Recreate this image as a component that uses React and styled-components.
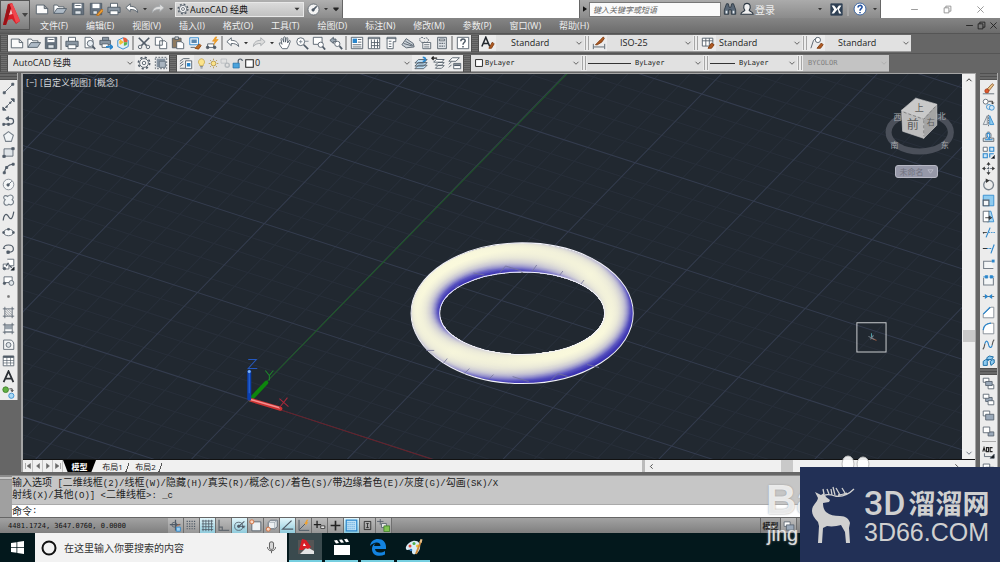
import React from 'react'
import styled, { createGlobalStyle, css } from 'styled-components'

const ui = '"Open Sans", "Noto Sans CJK SC", sans-serif'
const mono = '"DejaVu Sans Mono", "Noto Sans CJK SC", monospace'

const GlobalStyle = createGlobalStyle`
* { box-sizing: border-box; }
body { margin: 0; background: #666; font-family: ${ui}; font-size: 10px; color: #222; }
button, input, select { font: inherit; color: inherit; margin: 0; padding: 0; border: none; background: none; border-radius: 0; outline: none; }
button { display: flex; align-items: center; justify-content: center; flex: none; cursor: pointer; white-space: nowrap; }
select { appearance: none; }
svg { display: block; flex: none; }
`

/* ---------- icons ---------- */
const ink = '#505b67'
const blue = '#2a86cc'
const pale = '#cfe6f7'

const icons = {
  file: <path d="M1.5 3.5h9l4 4v6h-13zM10.500 3.500v4h4" fill="#fbfbfb" />,
  open: <g><path d="M1 13V3.500h4l1.500 2h6V8" fill="#fff" /><path d="M1 13l3.500-5.500H15.500L12 13z" fill="#aebac6" /></g>,
  save: <g><path d="M1.500 1.500h13v13h-13z" fill="#66727f" /><path d="M4 2h8v5H4z" fill="#fff" stroke="none" /><path d="M4.500 10h7v4h-7z" fill="#dfe5ea" /><path d="M5 4h6" /></g>,
  saveas: <g><path d="M1.500 1.500h13v13h-13z" fill="#66727f" /><path d="M4 2h8v5H4z" fill="#fff" stroke="none" /><path d="M4.500 10h5v4h-5z" fill="#dfe5ea" /><path d="M8.500 15l6-7 2 2-6 6z" fill="#e79b35" stroke="#b36b1c" /></g>,
  print: <g><path d="M4 6V1.500h8V6" fill="#fff" /><path d="M1 6h14v6H1z" fill="#8a96a2" /><path d="M3.500 10h9v4.500h-9z" fill="#fff" /></g>,
  preview: <g><path d="M3.500 1.500h6l3 3v9h-9z" fill="#fff" /><circle cx="9.500" cy="8.500" r="3.500" fill="#e8eef3" /><path d="M12 11.500l3 3.500" strokeWidth="2" /></g>,
  publish: <g><path d="M4 5V1.500h7V5M1 5h12v5H1z" fill="#8a96a2" /><path d="M3.500 9h7v4h-7z" fill="#fff" /><path d="M8 12.500h7M12.500 10l3 2.500-3 2.500" stroke={blue} strokeWidth="2" /></g>,
  model3d: <g><path d="M2 5l6-3 6 3v7l-6 3-6-3z" fill="#e2edf5" stroke={blue} /><path d="M8 2a4 4 0 0 1 5 5l-4 0z" fill="#e65d3a" stroke="none" /><path d="M13 7a4 4 0 0 1-4 4V7z" fill="#58b34c" stroke="none" /><path d="M5 4a4 4 0 0 0 0 6l4-3z" fill="#f3bf36" stroke="none" /></g>,
  cut: <g><path d="M2 2l9 9M14 2l-9 9" strokeWidth="1.800" /><circle cx="3.500" cy="12.500" r="2" /><circle cx="12.500" cy="12.500" r="2" /></g>,
  copy: <path d="M1.500 1.500h6l2 2v7h-8zM6.500 5.500h6l2 2v7h-8z" fill="#fff" />,
  paste: <g><path d="M1.500 2.500h10v11h-10z" fill="#8e7a5f" /><path d="M4.500 1h4v3h-4z" fill="#ccc" /><path d="M6.500 6.500h5l3 2v6h-8z" fill="#fff" /></g>,
  match: <g><path d="M2 2h10v8H2z" fill="#eef4f9" stroke={blue} /><path d="M4 4h6v4H4z" fill="#5a86ad" stroke="none" /><path d="M8 14l5-5 2 2-3 4z" fill="#c06c23" stroke="#8a4712" /><path d="M3 13h5" /></g>,
  block: <g><path d="M3 9h7v4H3z" fill="#fff" /><circle cx="3" cy="13" r="1.500" fill={ink} /><circle cx="11" cy="13" r="1.500" fill={ink} /><path d="M12 1L8.500 6h3L10 10l5-6h-3l1.500-3z" fill="#f2a129" stroke="#e08a10" strokeWidth=".6" /></g>,
  undo: <path d="M1 6.500L6 2v3c5 0 8 2 8.500 7C12 9 9.500 8.500 6 8.500V11z" fill="#fff" />,
  redo: <path d="M15 6.500L10 2v3c-5 0-8 2-8.500 7C4 9 6.500 8.500 10 8.500V11z" fill="#ddd" stroke="#a4a8ac" />,
  pan: <path d="M5 14.500C3 12 1 9 1.500 8s2 0 3 1.500L3.500 4c0-1.500 1.500-1.500 2 0l1 3V2c0-1.500 1.800-1.500 2 0v5l1-4.500c.5-1.200 1.800-.8 1.700.5L11 8l1.500-2.500c.8-1 1.900-.3 1.500.8-1 3-2 6-3.500 8.200z" fill="#fff" />,
  zoom: <g><circle cx="6.500" cy="6.500" r="4.500" fill="#fff" /><path d="M10 10l5 5" strokeWidth="2" /><path d="M4.500 6.500h4M6.500 4.500v4M11 6h4.500" stroke="#7b8691" /></g>,
  zoomwin: <g><path d="M1.500 1.500h10v8h-10z" fill="#fff" /><circle cx="10" cy="10" r="3" fill="#fff" /><path d="M12 12l3 3.500" strokeWidth="2" /></g>,
  zoomprev: <g><path d="M1 5l4-3.500v2h3v3H5v2z" fill="#9aa6b1" /><circle cx="9.500" cy="9" r="3" fill="#fff" /><path d="M12 11.500l3 3.500" strokeWidth="2" /></g>,
  props: <g><path d="M1.500 1.500h13v13h-13z" fill="#fff" /><path d="M3 3h5v5H3z" fill={blue} stroke="none" /><path d="M9 4h4M9 7h4M3 10h10M3 12.500h10" /></g>,
  dcenter: <g><path d="M1.500 1.500h13v13h-13z" fill="#fff" /><path d="M1 3h14M5 4v10M5 7.500h9M5 11h9M8.500 4v10M12 4v10" /></g>,
  palette: <g><path d="M3.500 1.500h10v5h-3v8h-7z" fill="#fff" /><path d="M3 3h11M5.500 6h3M5.500 9h3M5.500 12h3" /></g>,
  sheets: <path d="M1 10l5-7 8 5.500 1 4-9 1zM3 8.500l10 3M5 6l9 5" fill="#cad1d8" />,
  markup: <g><path d="M2 4c0-3 4-3 5-1 3-2 5 0 5 2s-3 3-5 2c-2 1-5 0-5-3z" strokeDasharray="2 1" /><path d="M5.500 7.500h9v7h-9z" fill="#fff" /><path d="M7 10h6M7 12.500h6" /></g>,
  calc: <g><path d="M3 1.500h10v13H3z" fill="#dfe3e7" /><path d="M5 3.500h6v2H5z" fill="#fff" /><path d="M5 8.500h6M5 11.500h6" strokeDasharray="1.500 1" strokeWidth="1.500" /></g>,
  help: <g><path d="M1.500 1.500h13v13h-13z" fill="#fff" /><path d="M5.500 6c0-3.500 5-3.500 5-.5 0 2-2.500 2-2.500 4.500M8 11.500v1.500" strokeWidth="1.700" /></g>,
  textstyle: <g><path d="M1 12L5.500 1.500 10 12M3 8.500h5.500" strokeWidth="1.800" stroke="#23282e" /><path d="M9 14l4-7 2 2-3 5z" fill="#b05a22" stroke="#7e3b10" /></g>,
  dimstyle: <g><path d="M1.500 9v6M14.500 9v6M2 12.500h12" /><path d="M4 10l6-6 3-3 1 2-3 4-5 3z" fill="#b05a22" stroke="#7e3b10" /></g>,
  tablestyle: <g><path d="M1.500 2.500h12v9h-12zM1.500 5.500h12M5.500 2.500v9M9.500 2.500v9" fill="#fff" /><path d="M8 14l4-6 3 2-3 4z" fill="#b05a22" stroke="#7e3b10" /></g>,
  leader: <g><path d="M1 14L4 5l4-3.500" /><circle cx="9" cy="4.500" r="3" fill="#fff" /><path d="M8 14l5-6 2 2-3 4z" fill="#b05a22" stroke="#7e3b10" /></g>,
  gear: <g><circle cx="8" cy="8" r="5" fill="#f5f5f5" /><circle cx="8" cy="8" r="2" /><circle cx="8" cy="8" r="6.500" strokeDasharray="2.500 2.600" strokeWidth="1.800" /></g>,
  wspace: <g><path d="M3 3h10v10H3z" fill="#8794a2" stroke="none" /><path d="M1.500 1.500h13v13h-13z" strokeDasharray="2 1.500" /><path d="M6 6h7v7H6z" fill="#a9b4bf" stroke="#66727f" /></g>,
  layers: <g><path d="M1 6l4-3h7M1 9l4-3M1 12l4-3M1 14h6" /><path d="M7.500 5.500h7v9h-7z" fill="#fff" /><path d="M9 8h4v4H9z" fill={blue} stroke="none" /></g>,
  bulb: <g><path d="M8 1a4.800 4.800 0 0 1 2.700 8.500V11H5.300V9.500A4.800 4.800 0 0 1 8 1z" fill="#fbe38a" stroke="#c3a040" /><path d="M6 12.500h4M6.500 14.500h3" /></g>,
  sun: <g><circle cx="8" cy="8" r="3.500" fill="#fbe38a" stroke="#a58431" /><path d="M8 1v2M8 13v2M1 8h2M13 8h2M3 3l1.500 1.500M11.500 11.500L13 13M13 3l-1.500 1.500M4.500 11.500L3 13" stroke="#a58431" /></g>,
  freeze: <g stroke="#b5b9bd"><path d="M1.500 1.500h8v6h-8z" /><circle cx="10.500" cy="10.500" r="3" strokeWidth="2" /></g>,
  lock: <g><path d="M9 8V4.500c0-4 6-4 6 0" strokeWidth="1.600" /><path d="M1.500 7.500h9v7h-9z" fill="#4aa3dc" stroke="#1d6ea7" /></g>,
  swatch: <path d="M2.500 2.500h11v11h-11z" fill="#fff" stroke="#222" strokeWidth="1.500" />,
  layset: <g><path d="M1 8l4-4h10l-4 4zM1 11.500l4-4h10l-4 4zM1 14.500l4-4h10l-4 4z" fill="#bcdcf2" /><path d="M10 1.500c4 0 4 4 0 5" stroke={blue} strokeWidth="2" /></g>,
  layprev: <g><path d="M3 7l3-3h9l-3 3zM5 10.500l3-3h7l-3 3zM5 14l3-3h7l-3 3z" fill="#fff" /><path d="M1 2.500h6M3 .5l-2 2 2 2" strokeWidth="1.500" stroke="#222" /></g>,
  laystate: <g><path d="M1 6l4-4h8l-4 4zM1 9.500l3-3M1 13l3-3" fill="#fff" /><path d="M6.500 8.500h8v6h-8z" fill="#fff" /><path d="M7 10.500h7" strokeWidth="2" /></g>,
  line: <g><path d="M3 13L13 3" /><path d="M1.500 12h2.500v2.500H1.500zM12 1.500h2.500V4H12z" fill={ink} /></g>,
  xline: <g><path d="M2 14L14 2" /><path d="M1 15v-4l4 4zM15 1v4l-4-4z" fill={ink} /><path d="M5 10h1.500v1.500H5zM9.500 5H11v1.500H9.500z" fill={ink} /></g>,
  pline: <g><path d="M2.500 12.500h8c5 0 5-7 0-7H6" strokeWidth="1.500" /><path d="M1 11.500h2V14H1zM7 11.500h2V14H7zM8 3L4.500 5.500 8 8z" fill={ink} /></g>,
  polygon: <path d="M8 2l6 4.500-2.500 7.500h-7L2 6.500z" fill="#f1f4f6" stroke="#77808a" strokeWidth="1.300" />,
  rect: <g><path d="M2.500 3.500h11v9h-11z" fill="#dfe4e8" /><path d="M1 11.500h3V14H1zM12 2h3v2.500h-3z" fill={ink} /></g>,
  arc: <g><path d="M3 14C3.500 7 7 3.500 14 2.500" strokeWidth="1.400" /><path d="M1.500 12H4v2.500H1.500zM12.500 1.500H15V4h-2.500zM4.500 5.500H7V8H4.500z" fill={ink} /></g>,
  circle: <g><circle cx="8" cy="8" r="6.500" fill="#f4f6f7" stroke="#77808a" /><path d="M8 8l4-4" /><circle cx="7.500" cy="8.500" r="1.500" fill={ink} /></g>,
  cloud: <path d="M4 7C0 5 3 0 7 3c4-4 9 0 5.500 4 4 3 0 8-4 5.500C5 16 0 12 4 7z" fill="#f0f3f5" stroke="#77808a" strokeWidth="1.400" />,
  spline: <path d="M1.500 13C2 6 5 3 8 8s5 3 6.500-6" strokeWidth="1.500" />,
  ellipse: <g><ellipse cx="8" cy="8" rx="6" ry="4" fill="#f4f6f7" /><path d="M1 7h2v2H1zM13 7h2v2h-2zM7 3h2v2H7z" fill={ink} /></g>,
  earc: <g><path d="M2 8.500C2 2 14 2 14 8.500c0 3-3 4-5.500 4" strokeWidth="1.400" /><path d="M6 11h3v3H6zM1 8h3" fill={ink} /></g>,
  insert: <g><path d="M6.500 1.500h8v8h-4M1.500 7.500h7v6h-7z" fill="#fff" /><path d="M5 10l3-4M9 9l3 3" strokeWidth="1.600" /><circle cx="3" cy="13" r="1.500" fill={ink} /><path d="M15 11v4h-4z" fill="#000" /></g>,
  makeblk: <g><path d="M2.500 3.500h10v7h-10z" fill="#fff" /><circle cx="3" cy="11.500" r="1.500" fill={ink} /><circle cx="11.500" cy="11" r="3" fill="#dfe4e8" /></g>,
  point: <path d="M7 7h2v2H7z" fill="#777" stroke="#777" />,
  hatch: <g><path d="M3.500 1v14M12.500 1v14M1 3.500h14M1 12.500h14" /><path d="M5 4l7 7M4 6l6 6M8 4l4 4M4 9l3 3" strokeWidth=".6" /></g>,
  gradient: <g><path d="M4 4h8v8H4z" fill="#9aa4ae" stroke="none" /><path d="M3.500 1v14M12.500 1v14M1 3.500h14M1 12.500h14" /><path d="M4 10h8" stroke="#fff" strokeWidth="2" /></g>,
  region: <g><path d="M2 2.500h8c3 0 4.500 3 4.500 5.500v6H2z" fill="#f4f6f7" /><circle cx="8" cy="8.500" r="3" fill="#dfe4e8" /></g>,
  table: <g><path d="M1.500 2.500h13v12h-13z" fill="#fff" /><path d="M1.500 3.500h13" strokeWidth="2.500" /><path d="M1.500 8h13M1.500 11h13M6 4v10M10.500 4v10" strokeWidth=".8" /></g>,
  mtext: <path d="M2 15L8 1.500 14 15M4 10.500h8" strokeWidth="2.200" stroke="#2a2e33" />,
  addsel: <g><circle cx="4.500" cy="4.500" r="3.500" fill="#62b044" stroke="#3d7c28" /><circle cx="11.500" cy="12" r="3.200" fill="#a9d8f5" stroke={blue} /><path d="M9 3.500h3.500v3M11 5l1.500 2L14 5" stroke="#222" /></g>,
  erase: <g><path d="M6 9l6.500-7 2 1.500-6 7.500z" fill="#e9c489" stroke="#8d5a2c" /><circle cx="6" cy="11" r="2.500" fill="#e0592c" stroke="#a43715" /><path d="M1 14.500h14" /></g>,
  copyobj: <g><circle cx="4.500" cy="4.500" r="3" fill="#fff" /><path d="M8 4h5v3M11.500 5.500l1.500 2 1.500-2" stroke="#222" /><circle cx="8.500" cy="11" r="3" stroke={blue} /><circle cx="12" cy="12" r="3" fill={pale} stroke={blue} /></g>,
  mirror: <g><path d="M6.500 2v11H1.500z" fill="#e8ebed" stroke="#77808a" /><path d="M9.500 2v11h5z" fill="#8ecbf0" stroke={blue} /><path d="M8 1v14" strokeDasharray="2 1" /></g>,
  offset: <g><path d="M1.500 14v-4h4C2 0 14 0 10.500 10h4v4z" fill="#e8ebed" /><path d="M3.500 12h4V9.500C3 2 12 2 9 9.500V12h4" stroke={blue} strokeWidth="1.300" /></g>,
  array: <g><path d="M1.500 1.500h5v5h-5z" fill="#fff" /><path d="M9.500 1.500h5v5h-5zM1.500 9.500h5v5h-5zM9.500 14V9.500h5" fill={pale} stroke={blue} strokeWidth="1.300" /><path d="M15.500 11.500v4h-4z" fill="#000" /></g>,
  move: <g><path d="M8 2v12M2 8h12" strokeDasharray="3 1" /><path d="M8 0l2.500 3.500h-5zM8 16l2.500-3.500h-5zM0 8l3.500-2.500v5zM16 8l-3.500-2.500v5z" fill="#333" stroke="none" /></g>,
  rotate: <g><path d="M5 3.300A6 6 0 1 0 9 2.500" strokeWidth="1.600" stroke="#77808a" /><path d="M4.500.5L9.500 3l-4.500 3z" fill="#333" stroke="none" /></g>,
  scale: <g><path d="M1.500 1.500h13v13h-13z" fill="#8ecbf0" stroke={blue} /><path d="M1.500 7.500h7v7h-7z" fill="#f4f6f7" strokeWidth="1.400" /></g>,
  stretch: <g><path d="M8 1.500h3l3.500 13H6z" fill="#a9d8f5" stroke={blue} /><path d="M1.500 1.500h7v13h-7z" fill="#fff" /><path d="M4 9.500h7M9 7.500l3 2-3 2z" stroke="#222" /></g>,
  trim: <g><path d="M5 14L10 2" stroke={blue} strokeWidth="1.400" /><path d="M1 8h5M2 7.500v2" stroke="#333" /><path d="M8 8h8" stroke={blue} strokeDasharray="2 1" /></g>,
  extend: <g><path d="M11 14L15 3" stroke={blue} strokeWidth="1.400" /><path d="M1 8h6" stroke="#333" strokeWidth="1.300" /><path d="M6 8h7" stroke={blue} strokeDasharray="2 1" strokeWidth="1.300" /></g>,
  breakpt: <g><path d="M12 4H2v9h12" fill="#f4f6f7" stroke="#77808a" strokeWidth="1.300" /><path d="M12 2h3.500v3.500H12z" fill={blue} stroke="none" /></g>,
  brk: <g><path d="M2 4.500v9h12v-9" fill="#f4f6f7" stroke="#77808a" strokeWidth="1.300" /><path d="M4 2h3v3H4zM10 2h3v3h-3zM1.500 3.500H5M11 3.500h4" fill={blue} stroke={blue} /></g>,
  join: <g><path d="M1 8h14" stroke="#555" /><path d="M3.500 5L8 8l-4.500 3zM12.500 5L8 8l4.500 3z" fill={blue} stroke="none" /></g>,
  chamfer: <g><path d="M1.500 10v4.500h13v-13H11z" fill="#fff" stroke="#77808a" /><path d="M1.500 10L10 1.500" stroke={blue} strokeWidth="1.500" /></g>,
  fillet: <g><path d="M1.500 10v4.500h13v-13H11C5 2 2 5 1.500 10z" fill="#fff" stroke="#77808a" /><path d="M1.500 10C2 5 5 2 11 1.500" stroke={blue} strokeWidth="1.500" /></g>,
  blend: <g><path d="M1 14c2-2 2-4 2.500-7M15 2c-2 2-2 4-2.500 7" stroke="#555" strokeWidth="1.400" /><path d="M3.500 7c2-6 4-2 4.500 1s3 6 4.500 1" stroke={blue} strokeWidth="1.400" /></g>,
  explode: <g><path d="M1.500 9l3-2h4l-2 2v5h-5zM6 4.500l3-2 5 1-2 3-6 1zM10 9l3-2 2 0v4l-4 3z" fill="#8ecbf0" stroke="#1d6ea7" strokeWidth="1.200" /></g>,
  front: <g><path d="M1.500 1.500h7v5h-7zM7.500 9.500h7v5h-7z" fill="#fff" /><path d="M4.500 5.500h8v5h-8z" fill="#9aa8b8" /></g>,
  back: <g><path d="M4.500 5.500h8v5h-8z" fill="#9aa8b8" /><path d="M1.500 1.500h7v5h-7zM7.500 9.500h7v5h-7z" fill="#fff" /></g>,
  above: <g><path d="M1.500 2.500h8v6h-8z" fill="#fff" /><path d="M4.500 6.500h10v7h-10z" fill="#9aa8b8" /></g>,
  under: <g><path d="M7.500 8.500h7v5h-7z" fill="#9aa8b8" /><path d="M1.500 2.500h8v7h-8z" fill="#fff" /></g>,
  snap: <g><path d="M8 1v13M1 7h13" strokeWidth="1.500" /><circle cx="6.500" cy="7" r="3" /><path d="M9 10h5v5H9z" fill="#9fd1f0" stroke={blue} /><path d="M10 9l3-3" stroke="#d2622b" /></g>,
  dots: <path d="M2 3h12M2 6h12M2 9h12M2 12h12" strokeDasharray="1.500 1.500" strokeWidth="1.500" />,
  grid: <path d="M2.500 1v14M6 1v14M9.500 1v14M13 1v14M1 2.500h14M1 6h14M1 9.500h14M1 13h14" />,
  ortho: <path d="M2.500 1v13H15M6.500 14v-4h-4" strokeWidth="1.500" stroke="#626970" />,
  polar: <g><circle cx="7" cy="9" r="5" /><circle cx="7" cy="9" r="1.500" fill={ink} /><path d="M7 9h8M7 9l7-6M11 9l3 2" strokeWidth="1.300" /></g>,
  osnap: <g><path d="M3.500 3.500h11v11h-11z" fill="#eef1f3" /><circle cx="3.500" cy="3.500" r="2.500" fill="#f6d9c8" stroke="#d2622b" /></g>,
  osnap3: <g><path d="M4 4l3-2.500h8v8L12 12H4z" fill="#eef1f3" /><path d="M4 4h8v8M12 4l3-2.500" stroke="#9aa4ae" /><circle cx="4" cy="12.500" r="2.500" fill="#f6d9c8" stroke="#d2622b" /></g>,
  otrack: <path d="M13 2L2 12.500h13" strokeWidth="1.500" />,
  ducs: <g><path d="M2.500 1v13H15M3 13l7-7" strokeWidth="1.200" /><path d="M12 1l-3 5h2l-1 3 4-5h-2l2-3z" fill="#f2a129" stroke="none" /></g>,
  dyn: <g><path d="M5 2v9M1 7h9" strokeWidth="1.600" stroke="#222" /><path d="M9.500 8.500h5v3h-5z" fill="#fff" stroke="#222" /></g>,
  lwt: <path d="M8 2v12M2 8h12" strokeWidth="2" stroke="#222" />,
  tpy: <g><path d="M1.500 1.500h13v13h-13z" fill="#bfe2f7" stroke={blue} strokeWidth="1.500" /><path d="M3 4.500h10M3 7h10M3 9.500h10M3 12h10" stroke={blue} strokeDasharray="1.500 1" strokeWidth=".8" /></g>,
  qp: <path d="M4 3h8v10H4zM8 5.500v5M6.500 5.500h3M6.500 10.500h3" stroke="#222" />,
  sc: <g><path d="M4 0v7M0 3h8" /><path d="M5.500 5.500h6v5h-6z" fill="#e8e8e8" /><path d="M8.500 8.500h7v7h-7z" fill="#7fc451" stroke="#3d7c28" /></g>,
  binoc: <g><path d="M1.500 9L4 2h2l1 4h2l1-4h2l2.500 7v5h-5V9h-3v5h-5z" fill="#596776" stroke="#2c3742" /><path d="M3 10h2v3H3zM11 10h2v3h-2z" fill="#dfe6ec" stroke="none" /></g>,
  user: <g><path d="M1 14c0-3 4-3 4.500-4.500C3 5 4.500 1.500 8 1.500S13 5 10.500 9.500C11 11 15 11 15 14z" fill="#f1f1f1" stroke="#2c3742" strokeWidth="1.300" /></g>,
  exchange: <g><path d="M1 1h14v14H1z" fill="#2f4054" stroke="#2f4054" /><path d="M2 3h3l4 5-4 5H2l3-5zM14 3h-3L8.500 6.500 10 9l1 4h3l-3-5z" fill="#fff" stroke="none" /></g>,
  qhelp: <g><circle cx="8" cy="8" r="6.800" fill="#fff" stroke="#2e5c9d" /><path d="M5.800 6.200c0-3 4.600-3 4.600-.4C10.400 7.700 8 7.500 8 10M8 11.300v1.500" stroke="#1f4fa0" strokeWidth="1.800" /></g>,
  compass: <g><circle cx="8" cy="8" r="6.800" fill="#f3f3f3" stroke="#5b646d" /><path d="M7 9l5-5" strokeWidth="2" /><circle cx="7.500" cy="8.500" r="1.500" fill={ink} /></g>,
  caret: <path d="M4 6h8l-4 4.500z" fill="#333" stroke="none" />,
  fullcaret: <path d="M1 4h14v3l-7 7-7-7z" fill="#222" stroke="none" />,
  hollow: <path d="M2 4h12l-6 8z" stroke="#c3c4cf" strokeWidth="1.500" />,
  chevron: <path d="M3 5.500l5 5 5-5" strokeWidth="1.600" />,
  up: <path d="M3 10.500l5-5 5 5" stroke="#333" strokeWidth="2" />,
  left: <path d="M10.500 3l-5 5 5 5" stroke="#333" strokeWidth="2" />,
  right: <path d="M5.500 3l5 5-5 5" stroke="#333" strokeWidth="2" />,
  play: <path d="M4 2.500v11L12 8z" fill="#111" stroke="none" />,
  first: <path d="M3 2v12M13 3v10L6 8z" fill="#666" stroke="#666" />,
  prev: <path d="M11 3v10L5 8z" fill="#666" stroke="#666" />,
  next: <path d="M5 3v10l6-5z" fill="#666" stroke="#666" />,
  last: <path d="M13 2v12M3 3v10l7-5z" fill="#666" stroke="#666" />,
  min: <path d="M2 8h12" strokeWidth="1.500" />,
  max: <path d="M2 5h8.500v9H2zM5 5V2h9v9h-3.500" strokeWidth="1.500" />,
  close: <path d="M2.500 2.500l11 11M13.500 2.500l-11 11" strokeWidth="1.500" />,
  abc: <g><path d="M1 7l1.500-5L4 7M5.500 2v5h2.500V2zM13 2h-3v5h3" strokeWidth="1.400" stroke="#222" /><path d="M3 9v4h9" /><path d="M15 10v5h-5z" fill="#000" /></g>,
  mic: <g stroke="#444"><path d="M5.500 2.500c0-2 5-2 5 0v6c0 2.500-5 2.500-5 0z" fill="#d5d5d5" /><path d="M3 7.500c0 6 10 6 10 0M8 12v3" /></g>,
}

const Icon = ({ name, size = 14, color = ink }) => (
  <svg width={size} height={size} viewBox="0 0 16 16" fill="none" stroke={color} aria-hidden="true">
    {icons[name]}
  </svg>
)

/* ---------- header ---------- */
const Page = styled.div`
display: flex;
flex-direction: column;
height: 100vh;
overflow: hidden;
position: relative;
background: #666;
`
const Header = styled.header`
display: grid;
grid-template-columns: 30px 1fr;
grid-template-rows: 18px 15px;
flex: none;
background: linear-gradient(#8c8c8c, #6b6b6b 90%, #5a5a5a);
`
const AppButton = styled.button`
grid-row: 1 / 3;
height: 30px;
border: 1px solid #555;
background: linear-gradient(#b4b4b4, #7d7d7d);
`
const TitleBar = styled.div`
display: flex;
align-items: stretch;
background: #fff;
`
const QuickAccess = styled.div`
display: flex;
align-items: center;
width: 313px;
padding-left: 3px;
background: linear-gradient(#b0b0b0, #8b8b8b);
border-right: 1px solid #666;
`
const ToolButton = styled.button`
width: ${p => p.$w || 17}px;
height: 16px;
`
const WorkspacePick = styled.label`
display: flex;
align-items: center;
width: 130px;
height: 15px;
gap: 1px;
padding: 0 1px;
background: linear-gradient(#dadada, #c2c2c2);
border: 1px solid #e8e8e8;
font-size: 9px;
select { flex: 1; min-width: 0; height: 13px; line-height: 13px; color: #111; }
`
const Spacer = styled.div`
flex: ${p => p.$grow || 1};
`
const InfoCenter = styled.div`
display: flex;
align-items: center;
width: 302px;
background: linear-gradient(#ababab, #8b8b8b);
border: solid #666;
border-width: 0 1px;
`
const SearchInput = styled.input`
width: 132px;
height: 15px;
padding: 0 3px;
background: #fafafa;
border: 1px solid #777;
font-size: 8px;
font-style: italic;
&::placeholder { color: #666; opacity: 1; }
`
const Login = styled.button`
flex: 1;
justify-content: flex-start;
color: #eee;
`
const WindowButtons = styled.div`
display: flex;
align-items: center;
width: 119px;
padding-left: 17px;
`
const MenuBar = styled.nav`
display: flex;
align-items: center;
gap: 18px;
padding-left: 10px;
background: linear-gradient(#858585, #6c6c6c);
font-size: 9px;
button { color: #efefef; line-height: 14px; }
`
const DocButtons = styled.div`
display: flex;
margin-left: auto;
padding-right: 1px;
`

/* ---------- toolbars ---------- */
const ToolRow = styled.div`
display: flex;
flex: none;
height: 20px;
padding-top: 1px;
border-top: 1px solid #555;
font-size: 9px;
`
const Grip = styled.div`
width: 8px;
height: 17px;
flex: none;
border: solid #4f4f4f;
border-width: 0 1px;
background: repeating-linear-gradient(#5a5a5a 0 1px, #707070 1px 2px);
`
const Panel = styled.div`
display: flex;
align-items: center;
flex: none;
height: 17px;
background: #ececec;
border-bottom: 1px solid #9a9a9a;
`
const Divider = styled.div`
width: ${p => (p.$double ? 4 : 1)}px;
height: 14px;
margin: 0 1px;
flex: none;
border: solid #a6a6a6;
border-width: 0 1px;
`
const Combo = styled.label`
display: flex;
align-items: center;
width: ${p => p.$w}px;
height: 16px;
padding: 0 1px 0 ${p => p.$pad || 5}px;
background: ${p => (p.$off ? '#c3c3c3' : '#e1e1e1')};
color: ${p => (p.$off ? '#808080' : '#222')};
${p => p.$mono && css`font-family: ${mono}; font-size: 7px;`}
select { flex: 1; min-width: 0; height: 16px; line-height: 16px; opacity: 1; }
`
const Stroke = styled.span`
width: ${p => p.$w}px;
height: 1px;
margin-right: 4px;
background: #333;
`

/* ---------- drawing area ---------- */
const Workspace = styled.main`
display: flex;
flex: 1;
min-height: 0;
padding: 0 2px 3px 0;
`
const SideBar = styled.div`
display: flex;
flex-direction: column;
align-items: center;
flex: none;
width: 18px;
align-self: ${p => (p.$fill ? 'stretch' : 'flex-start')};
overflow: hidden;
background: #ececec;
border-right: 1px solid #aaa;
button { width: 17px; height: 16px; }
`
const SideGrip = styled.div`
width: 100%;
height: 7px;
flex: none;
background: repeating-linear-gradient(#505050 0 1px, #686868 1px 3px);
`
const SideRule = styled.div`
width: 14px;
height: 1px;
margin: 2px 0;
flex: none;
background: #aaa;
`
const Frame = styled.section`
display: flex;
flex-direction: column;
flex: 1;
min-width: 0;
margin: 0 4px 0 3px;
border: solid #a5a5a5;
border-width: 1px 1px 0 2px;
background: #f0f0f0;
`
const Middle = styled.div`
display: flex;
flex: 1;
min-height: 0;
`
const Canvas = styled.div`
position: relative;
flex: 1;
min-width: 0;
background: #212830;
overflow: hidden;
`
const Drawing = styled.svg`
width: 100%;
height: 100%;
`
const ViewLabel = styled.div`
position: absolute;
top: 3px;
left: 3px;
display: flex;
gap: 3px;
font-size: 9px;
line-height: 12px;
button { color: #d5d8dc; }
`
const NamedUcs = styled.button`
position: absolute;
top: 91px;
right: 24px;
width: 43px;
height: 13px;
gap: 3px;
border: 1px solid #b7b8c4;
border-radius: 3px;
background: #9698a8;
color: #70727f;
font-size: 8px;
`
const VScroll = styled.div`
display: flex;
flex-direction: column;
width: 13px;
flex: none;
align-items: center;
button { height: 12px; }
`
const Thumb = styled.div`
width: 12px;
height: 12px;
flex: none;
background: #c9c9c9;
`
const TabBar = styled.div`
display: flex;
align-items: center;
height: 13px;
flex: none;
border-top: 1px solid #111;
background: #f0f0f0;
font-size: 8px;
`
const NavButton = styled.button`
width: 10px;
height: 12px;
border-right: 1px solid #c4c4c4;
`
const Tab = styled.button`
height: 12px;
width: 33px;
color: ${p => (p.$on ? '#fff' : '#222')};
font-weight: ${p => (p.$on ? 700 : 400)};
${p => p.$on
    ? css`background: #000; clip-path: polygon(0 0, 100% 0, 86% 100%, 14% 100%);`
    : css`background: linear-gradient(110deg, transparent 90%, #555 90% 93%, transparent 93%);`}
`
const HScroll = styled.div`
display: flex;
align-items: center;
width: 35%;
height: 12px;
margin-left: auto;
padding-right: 12px;
border-left: 3px solid #bbb;
`

/* ---------- command line, status, taskbar ---------- */
const CommandLine = styled.section`
display: flex;
flex: none;
height: 42px;
border-top: 1px solid #8c8c8c;
background: #c6c6c6;
`
const CommandGrip = styled.div`
width: 12px;
background: linear-gradient(#8b8b8b 1px, transparent 1px 3px, #8b8b8b 3px 4px, #a0a0a0 4px);
`
const CommandBody = styled.div`
flex: 1;
display: flex;
flex-direction: column;
line-height: 12px;
`
const History = styled.div`
flex: 1;
white-space: nowrap;
`
const Prompt = styled.label`
display: flex;
align-items: center;
height: 13px;
background: #fff;
border-top: 1px solid #aaa;
input { flex: 1; min-width: 0; }
`
const Mono = styled.span`
font-family: "Liberation Mono", monospace;
font-size: 9px;
line-height: 0;
white-space: pre;
`
const StatusBar = styled.footer`
display: flex;
align-items: center;
flex: none;
height: 16px;
border-top: 1px solid #666;
background: linear-gradient(#a2a2a2, #7f7f7f);
`
const Coords = styled.div`
width: 168px;
padding-left: 8px;
font-family: ${mono};
font-size: 7px;
color: #111;
`
const StatusButton = styled.button`
width: 16px;
height: 15px;
border-right: 1px solid #6f6f6f;
background: ${p => (p.$on ? 'linear-gradient(#e4f7fc, #8fcbdc)' : 'linear-gradient(#bcbcbc, #979797)')};
`
const LayoutButtons = styled.div`
display: flex;
margin-left: auto;
width: 240px;
`
const ModelButton = styled.button`
width: 21px;
border: solid #666;
border-width: 0 1px;
font-size: 8px;
font-weight: 700;
`
const Taskbar = styled.div`
display: flex;
flex: none;
height: 29px;
background: #03181c;
`
const StartButton = styled.button`
width: 35px;
`
const TaskSearch = styled.label`
display: flex;
align-items: center;
width: 252px;
padding: 0 9px 0 6px;
gap: 7px;
background: #f2f2f2;
input { flex: 1; min-width: 0; }
input::placeholder { color: #333; opacity: 1; }
`
const TaskApps = styled.div`
display: flex;
gap: 3px;
padding-left: 2px;
`
const TaskButton = styled.button`
width: 33px;
border-bottom: 2px solid #76cfe0;
background: ${p => (p.$on ? '#3a4a4e' : 'transparent')};
`

/* ---------- marks over the window ---------- */
const Watermark = styled.div`
position: absolute;
right: 0;
bottom: 0;
width: 236px;
height: 110px;
pointer-events: none;
color: rgba(255, 255, 255, .8);
font-family: "Liberation Sans", sans-serif;
text-shadow: 0 0 2px #999;
svg { margin-left: 72px; }
`
const MarkBig = styled.div`
width: 40px;
padding-left: 2px;
font-size: 42px;
font-weight: 700;
line-height: 44px;
`
const MarkSmall = styled.div`
width: 40px;
padding-left: 3px;
font-size: 20px;
line-height: 25px;
`
const Brand = styled.aside`
position: absolute;
right: 0;
bottom: 0;
display: flex;
align-items: center;
gap: 8px;
width: 200px;
height: 95px;
padding-left: 12px;
background: #223056;
color: #d0d0d0;
font-family: "Liberation Sans", sans-serif;
`
const BrandName = styled.div`
display: flex;
align-items: center;
gap: 3px;
height: 34px;
font-family: "Roboto", sans-serif;
font-size: 34px;
font-weight: 500;
white-space: nowrap;
span { font-family: "Noto Sans CJK SC", sans-serif; font-size: 27px; font-weight: 700; line-height: 34px; }
`
const BrandSite = styled.div`
font-size: 25px;
line-height: 24px;
`

const menus = ['文件(F)', '编辑(E)', '视图(V)', '插入(I)', '格式(O)', '工具(T)', '绘图(D)', '标注(N)', '修改(M)', '参数(P)', '窗口(W)', '帮助(H)']
const standard = ['file', 'open', 'save', '|', 'print', 'preview', 'publish', 'model3d', '|', 'cut', 'copy', 'paste', 'match', 'block', '|', 'undo', 'caret', 'redo', 'caret', 'pan', 'zoom', 'zoomwin', 'zoomprev', '|', 'props', 'dcenter', 'palette', 'sheets', 'markup', 'calc', '|', 'help']
const drawTools = ['line', 'xline', 'pline', 'polygon', 'rect', 'arc', 'circle', 'cloud', 'spline', 'ellipse', 'earc', 'insert', 'makeblk', 'point', 'hatch', 'gradient', 'region', 'table', 'mtext', 'addsel']
const modifyTools = ['erase', 'copyobj', 'mirror', 'offset', 'array', 'move', 'rotate', 'scale', 'stretch', 'trim', 'extend', 'breakpt', 'brk', 'join', 'chamfer', 'fillet', 'blend', 'explode']
const orderTools = ['front', 'back', 'above', 'under']
const statusTools = ['snap', 'dots', 'grid', 'ortho', 'polar', 'osnap', 'osnap3', 'otrack', 'ducs', 'dyn', 'lwt', 'tpy', 'qp', 'sc']
const statusOn = ['grid', 'polar', 'otrack', 'tpy']

const Tool = ({ name, w, size }) => (
  <ToolButton $w={w} aria-label={name}><Icon name={name} size={size} /></ToolButton>
)

const Choice = ({ w, pad, label, value, isMono, off, children }) => (
  <Combo $w={w} $pad={pad} $mono={isMono} $off={off}>
    {children}
    <select aria-label={label} disabled={off}><option>{value}</option></select>
    <Icon name="chevron" size={8} color={off ? '#aaa' : '#444'} />
  </Combo>
)

// latin runs in the console use the narrower fixed-width face
const Console = ({ text }) => text.split(/([\x20-\x7e]+)/).map((part, i) => (
  i % 2 ? <Mono key={i}>{part}</Mono> : part
))

/* ---------- scene ---------- */
const origin = { x: 251, y: 399 }

const gridLines = () => {
  const lines = []
  for (let i = -30; i <= 40; i++) {
    const y = origin.y + i * 18 - 0.324 * origin.x
    lines.push({ key: 'a' + i, major: i % 5 === 0, x1: 0, y1: y, x2: 1000, y2: y + 324 })
    const x = origin.x + i * 31
    lines.push({ key: 'b' + i, major: i % 5 === 0, x1: x - 400, y1: origin.y + 412, x2: x + 400, y2: origin.y - 412 })
  }
  return lines.sort((a, b) => a.major - b.major)
}

const ramp = [[-0.3, [58, 50, 176]], [0.05, [84, 78, 190]], [0.3, [146, 142, 204]], [0.55, [200, 198, 212]], [0.8, [232, 231, 216]], [1, [250, 249, 220]]]
const shade = (v) => {
  const c = Math.max(-0.3, Math.min(0.999, v))
  const i = ramp.findIndex(([stop]) => stop > c)
  const [a, ca] = ramp[i - 1]
  const [b, cb] = ramp[i]
  const k = (c - a) / (b - a)
  return `rgb(${ca.map((n, j) => Math.round(n + (cb[j] - n) * k)).join(',')})`
}

// s runs from the outer rim (1) to the inner rim (-1), u is the side that faces the light
const light = (s, u) => s * u * 0.8 + Math.sqrt(1 - s * s) * 0.88 - Math.abs(u) * 0.24 + 0.08

const Torus = () => {
  const steps = 30
  const rings = Array.from({ length: steps }, (_, i) => i / (steps - 1))
  const stops = [-1, -0.75, -0.5, -0.25, 0, 0.25, 0.5, 0.75, 1]
  return (
    <g>
      <defs>
        {rings.map((t, i) => (
          <linearGradient key={i} id={'ring' + i} x1=".85" y1=".857" x2=".15" y2=".143">
            {stops.map(u => (
              <stop key={u} offset={(u + 1) / 2} stopColor={shade(light((1 - 2 * t) * 0.92, u))} />
            ))}
          </linearGradient>
        ))}
        <clipPath id="tube">
          <path clipRule="evenodd" d="M412 313a110.500 70 0 1 0 221 0a110.500 70 0 1 0 -221 0M440.500 313a82 41 0 1 0 164 0a82 41 0 1 0 -164 0" />
        </clipPath>
      </defs>
      <g clipPath="url(#tube)">
        {rings.map((t, i) => (
          <ellipse key={i} cx="522.5" cy="313" rx={110.5 - 28.5 * t} ry={70 - 29 * t} fill={`url(#ring${i})`} />
        ))}
      </g>
      <g fill="none" stroke="#f2f2fa">
        <ellipse cx="522.5" cy="313" rx="110.5" ry="70" />
        <ellipse cx="522.5" cy="313" rx="82" ry="41" />
      </g>
      <path d="M474 273l11 2M500 273l6-7 16 5M532 272l5-7M560 275l3-4M581 284l3-4M456 288l3-3M444 363l4-5M465 373l5-5M489 379l5-5M513 376l16 5M551 380l7-7 10 3M587 364l12 3M427 350l8 0" stroke="#74749a" strokeWidth=".8" fill="none" />
    </g>
  )
}

const Scene = () => (
  <Drawing viewBox="23 75 940 383" preserveAspectRatio="xMidYMid slice" aria-label="圆环">
    {gridLines().map(({ key, major, ...pos }) => (
      <line key={key} {...pos} stroke={major ? '#343c4e' : '#282f3a'} />
    ))}
    <path d="M251 399L568 74" stroke="#1e5a26" />
    <path d="M251 399L963 631" stroke="#6a2028" />
    <Torus />
    <g strokeLinecap="round" strokeWidth="4">
      <path d="M252 399l16-17" stroke="#0d860d" />
      <path d="M252 399l30 9" stroke="#c33" />
      <path d="M253 399l28 8" stroke="#f59090" strokeWidth="1.500" />
      <path d="M251 398v-27" stroke="#0b3fae" />
      <path d="M251 392v-20" stroke="#2e6ad8" strokeWidth="1" />
    </g>
    <circle cx="251" cy="371" r="1.500" fill="#7fb2f5" />
    <g fill="none" strokeWidth="1">
      <path d="M250 359h8l-8 9h9" stroke="#2458c0" />
      <path d="M267 370l4 5 4-5M271 375v5" stroke="#1d8a2a" />
      <path d="M281 398l9 8M289 397l-8 10" stroke="#a8283a" />
    </g>
    <ellipse cx="918" cy="133" rx="31" ry="19" fill="none" stroke="#4b505a" strokeWidth="6" />
    <g stroke="#d6d6d6" strokeWidth=".6" strokeLinejoin="round">
      <path d="M900 111l14-12 21 6-13 14z" fill="#c9c9c9" />
      <path d="M900 111l22 8v20l-21-7z" fill="#bdbdbd" />
      <path d="M922 119l13-14v21l-13 13z" fill="#a4a4a4" />
    </g>
    <path d="M902 113l20 7 12-13M922 121v16" fill="none" stroke="#777" strokeWidth=".8" strokeDasharray="3 2" />
    <g fill="#5c5c5c" fontFamily='"Noto Sans CJK SC", sans-serif'>
      <text x="913" y="112" fontSize="9">上</text>
      <text x="905" y="130" fontSize="12">前</text>
      <text x="925" y="126" fontSize="8">右</text>
      <g fill="#a4a7ac" fontSize="8">
        <text x="889" y="149">南</text>
        <text x="939" y="149">东</text>
        <text x="892" y="121">西</text>
        <text x="936" y="120">北</text>
      </g>
    </g>
    <path d="M855.500 322.500h29v29h-29z" fill="none" stroke="#c9cbce" />
    <path d="M870 338v-5" stroke="#4f9ea8" />
    <path d="M870 338l5 2" stroke="#b0674a" />
    <path d="M867 336l6 3M872 335l-3 4" stroke="#77808a" />
  </Drawing>
)

const AppLogo = () => (
  <svg width="28" height="28" viewBox="0 0 28 28">
    <path d="M2 24L7 3l4-1 8 18-4 3-4-5-4 1-2 5z" fill="#d81e27" />
    <path d="M7 3L2 24l3 0 6-19z" fill="#9a1217" />
    <path d="M11 2l8 18-4 2L9 4z" fill="#f0484f" />
    <path d="M8 14l2-6 1.500 5z" fill="#f5c8c8" />
    <path d="M21 12h6l-3 4z" fill="#444" />
  </svg>
)

const Deer = () => (
  <svg width="44" height="58" viewBox="0 0 44 58" fill="#d0d0d0">
    <path d="M3 6l6 3 3-2 2 4 4 3-1 2-6 1c0 4 1 7 3 9 4 3 8 4 14 4 6 0 9 3 10 7l-1 5 1 15h-4l-1-11-4-7c-4 1-9 2-14 1l-4 2-1 15H6l1-17-1-4C2 32 0 28 0 25c0-6 5-8 6-13z" />
    <path d="M13 9c4-1 7 0 10 1 6 1 13-1 19-7M17 8l-2-5M20 9l-1-6M23 9l-2-8M28 9l-4-7M33 7l-3-5M26 9c3 0 6-1 9-2M12 8l-1-5" fill="none" stroke="#d0d0d0" strokeWidth="1.300" />
  </svg>
)

export default function App() {
  return (
    <Page>
      <GlobalStyle />
      <Header>
        <AppButton aria-label="菜单浏览器"><AppLogo /></AppButton>
        <TitleBar>
          <QuickAccess>
            {['file', 'open', 'save', 'saveas', 'print', 'undo'].map(n => <Tool key={n} name={n} w={18} />)}
            <Tool name="caret" w={8} size={8} />
            <Tool name="redo" />
            <Tool name="caret" w={9} size={8} />
            <WorkspacePick>
              <Icon name="gear" size={12} />
              <select aria-label="工作空间"><option>AutoCAD 经典</option></select>
              <Icon name="caret" size={10} />
            </WorkspacePick>
            <Tool name="compass" w={18} size={13} />
            <Tool name="caret" w={8} size={8} />
            <Tool name="fullcaret" w={12} size={6} />
          </QuickAccess>
          <Spacer />
          <InfoCenter>
            <Tool name="play" w={9} size={8} />
            <SearchInput aria-label="搜索" placeholder="键入关键字或短语" />
            <Tool name="binoc" w={17} />
            <Tool name="user" w={17} />
            <Login>登录</Login>
            <Tool name="caret" w={12} size={8} />
            <Tool name="exchange" w={20} size={13} />
            <Divider />
            <Tool name="qhelp" w={20} />
            <Tool name="caret" w={10} size={8} />
          </InfoCenter>
          <WindowButtons>
            {['min', 'max', 'close'].map(n => (
              <ToolButton key={n} $w={33} aria-label={n}><Icon name={n} size={9} color="#8a8a8a" /></ToolButton>
            ))}
          </WindowButtons>
        </TitleBar>
        <MenuBar>
          {menus.map(m => <button key={m}>{m}</button>)}
          <DocButtons>
            {['min', 'max', 'close'].map(n => (
              <ToolButton key={n} $w={12} aria-label={n}><Icon name={n} size={9} color="#1c1c1c" /></ToolButton>
            ))}
          </DocButtons>
        </MenuBar>
      </Header>

      <ToolRow>
        <Grip />
        <Panel>
          {standard.map((n, i) => {
            if (n === '|') return <Divider key={i} />
            return <Tool key={i} name={n} w={n === 'caret' ? 9 : 17} size={n === 'caret' ? 8 : 14} />
          })}
        </Panel>
        <Grip />
        <Panel>
          <Tool name="textstyle" />
          <Choice w={88} pad={15} label="文字样式" value="Standard" />
          <Divider $double />
          <Tool name="dimstyle" />
          <Choice w={86} pad={13} label="标注样式" value="ISO-25" />
          <Divider $double />
          <Tool name="tablestyle" />
          <Choice w={86} pad={3} label="表格样式" value="Standard" />
          <Divider $double />
          <Tool name="leader" />
          <Choice w={86} pad={13} label="引线样式" value="Standard" />
        </Panel>
      </ToolRow>

      <ToolRow>
        <Grip />
        <Panel>
          <Choice w={127} label="工作空间" value="AutoCAD 经典" />
          <Tool name="gear" />
          <Tool name="wspace" />
        </Panel>
        <Grip />
        <Panel>
          <Tool name="layers" />
          <Choice w={218} pad={1} label="图层" value="0">
            {['bulb', 'sun', 'freeze', 'lock', 'swatch'].map(n => <Tool key={n} name={n} w={12} size={11} />)}
          </Choice>
          <Tool name="layset" />
          <Tool name="layprev" />
          <Tool name="laystate" />
        </Panel>
        <Grip />
        <Panel>
          <Choice w={110} pad={1} label="颜色" value="ByLayer" isMono><Tool name="swatch" w={13} size={10} /></Choice>
          <Divider $double />
          <Choice w={116} pad={1} label="线型" value="ByLayer" isMono><Stroke $w={43} /></Choice>
          <Divider $double />
          <Choice w={88} pad={1} label="线宽" value="ByLayer" isMono><Stroke $w={25} /></Choice>
          <Divider $double />
          <Choice w={86} label="打印样式" value="BYCOLOR" isMono off />
        </Panel>
      </ToolRow>

      <Workspace>
        <SideBar>
          <SideGrip />
          {drawTools.map(n => <Tool key={n} name={n} size={13} />)}
        </SideBar>
        <Frame>
          <Middle>
            <Canvas>
              <Scene />
              <ViewLabel>
                <button>[−]</button>
                <button>[自定义视图]</button>
                <button>[概念]</button>
              </ViewLabel>
              <NamedUcs>未命名<Icon name="hollow" size={7} /></NamedUcs>
            </Canvas>
            <VScroll>
              <Tool name="up" w={13} size={8} />
              <Spacer $grow={7} />
              <Thumb />
              <Spacer $grow={3} />
              <ToolButton $w={13} aria-label="向下"><Icon name="chevron" size={8} /></ToolButton>
            </VScroll>
          </Middle>
          <TabBar>
            {['first', 'prev', 'next', 'last'].map(n => (
              <NavButton key={n} aria-label={n}><Icon name={n} size={8} /></NavButton>
            ))}
            <Tab $on>模型</Tab>
            <Tab>布局1</Tab>
            <Tab>布局2</Tab>
            <HScroll>
              <Tool name="left" w={13} size={7} />
              <Spacer $grow={11} />
              <Thumb />
              <Spacer $grow={14} />
              <Tool name="right" w={13} size={7} />
            </HScroll>
          </TabBar>
        </Frame>
        <SideBar $fill>
          <SideGrip />
          {modifyTools.map(n => <Tool key={n} name={n} size={13} />)}
          <SideGrip />
          {orderTools.map(n => <Tool key={n} name={n} size={13} />)}
          <SideRule />
          <Tool name="abc" size={13} />
          <Tool name="above" size={13} />
        </SideBar>
      </Workspace>

      <CommandLine>
        <CommandGrip />
        <CommandBody>
          <History>
            <div><Console text="输入选项 [二维线框(2)/线框(W)/隐藏(H)/真实(R)/概念(C)/着色(S)/带边缘着色(E)/灰度(G)/勾画(SK)/X" /></div>
            <div><Console text="射线(X)/其他(O)] <二维线框>: _c" /></div>
          </History>
          <Prompt><Console text="命令:" /><input aria-label="命令" /></Prompt>
        </CommandBody>
      </CommandLine>

      <StatusBar>
        <Coords>4481.1724, 3647.0760, 0.0000</Coords>
        {statusTools.map(n => (
          <StatusButton key={n} $on={statusOn.includes(n)} aria-label={n}><Icon name={n} size={13} /></StatusButton>
        ))}
        <LayoutButtons>
          <ModelButton>模型</ModelButton>
          <StatusButton aria-label="布局"><Icon name="above" size={12} /></StatusButton>
        </LayoutButtons>
      </StatusBar>

      <Taskbar>
        <StartButton aria-label="开始">
          <svg width="13" height="13" viewBox="0 0 13 13" fill="#fff">
            <path d="M0 2l5.500-.800V6H0zM6.300 1.100L13 0v6H6.300zM0 6.800h5.500v5L0 11zM6.300 6.800H13V13l-6.700-1z" />
          </svg>
        </StartButton>
        <TaskSearch>
          <svg width="16" height="16" viewBox="0 0 16 16"><circle cx="8" cy="8" r="6.500" fill="none" stroke="#111" strokeWidth="2" /></svg>
          <input placeholder="在这里输入你要搜索的内容" />
          <Icon name="mic" size={13} />
        </TaskSearch>
        <TaskApps>
          <TaskButton $on aria-label="AutoCAD">
            <svg width="18" height="18" viewBox="0 0 18 18">
              <path d="M1 2h16v14H1z" fill="#555" /><path d="M10 9l7 4v3H3z" fill="#e4e4e4" />
              <path d="M2 12L5 1l4 1 5 7-3 2-3-1-2 2z" fill="#d81e27" /><path d="M6 8l1-3 2 3z" fill="#fff" />
            </svg>
          </TaskButton>
          <TaskButton aria-label="视频">
            <svg width="18" height="18" viewBox="0 0 18 18" fill="#fff">
              <path d="M1 7h16v10H1z" /><path d="M1 2.500l3-.4 2 3-3 .4zM6 1.800l3-.4 2 3-3 .4zM11 1.200l3-.4 2 3-3 .4z" />
            </svg>
          </TaskButton>
          <TaskButton aria-label="Edge">
            <svg width="18" height="18" viewBox="0 0 18 18">
              <path d="M1 8C2 3 5 1 9 1c5 0 8 3.500 8 8v2H6c.3 4 6 4.500 10 2v3.500c-6 3-13 1-13-5.500 0-3 1.500-5 4-6-1.500 1-1.800 2-1.800 3h6.300c0-5-7-4.500-10.500 0z" fill="#1383e0" />
            </svg>
          </TaskButton>
          <TaskButton aria-label="画图">
            <svg width="18" height="18" viewBox="0 0 18 18">
              <path d="M8 3c5-1 8 3 7 7-1 5-5 7-7 6-2-1 0-3-2-4s-4 1-5-1c-1-3 3-7 7-8z" fill="#d9ecf6" />
              <circle cx="5" cy="8" r="1.500" fill="#e04a3a" /><circle cx="9" cy="5.500" r="1.500" fill="#4cae4c" /><circle cx="12.500" cy="8" r="1.500" fill="#f0c030" /><circle cx="6" cy="12" r="1.300" fill="#3478c0" />
              <path d="M11 16L16 3" stroke="#d08a3a" strokeWidth="2" /><path d="M14.500 4l1-3 2 .5-1 3.500z" fill="#e8c088" />
            </svg>
          </TaskButton>
        </TaskApps>
      </Taskbar>

      <Watermark>
        <svg width="40" height="26" viewBox="0 0 40 26" fill="#fff" fillOpacity=".9" stroke="#bbb">
          <ellipse cx="12" cy="12" rx="6" ry="8" /><ellipse cx="27" cy="12" rx="6" ry="7" />
        </svg>
        <MarkBig>Ba</MarkBig>
        <MarkSmall>jing</MarkSmall>
      </Watermark>
      <Brand>
        <Deer />
        <div>
          <BrandName>3D<span>溜溜网</span></BrandName>
          <BrandSite>3D66.COM</BrandSite>
        </div>
      </Brand>
    </Page>
  )
}
